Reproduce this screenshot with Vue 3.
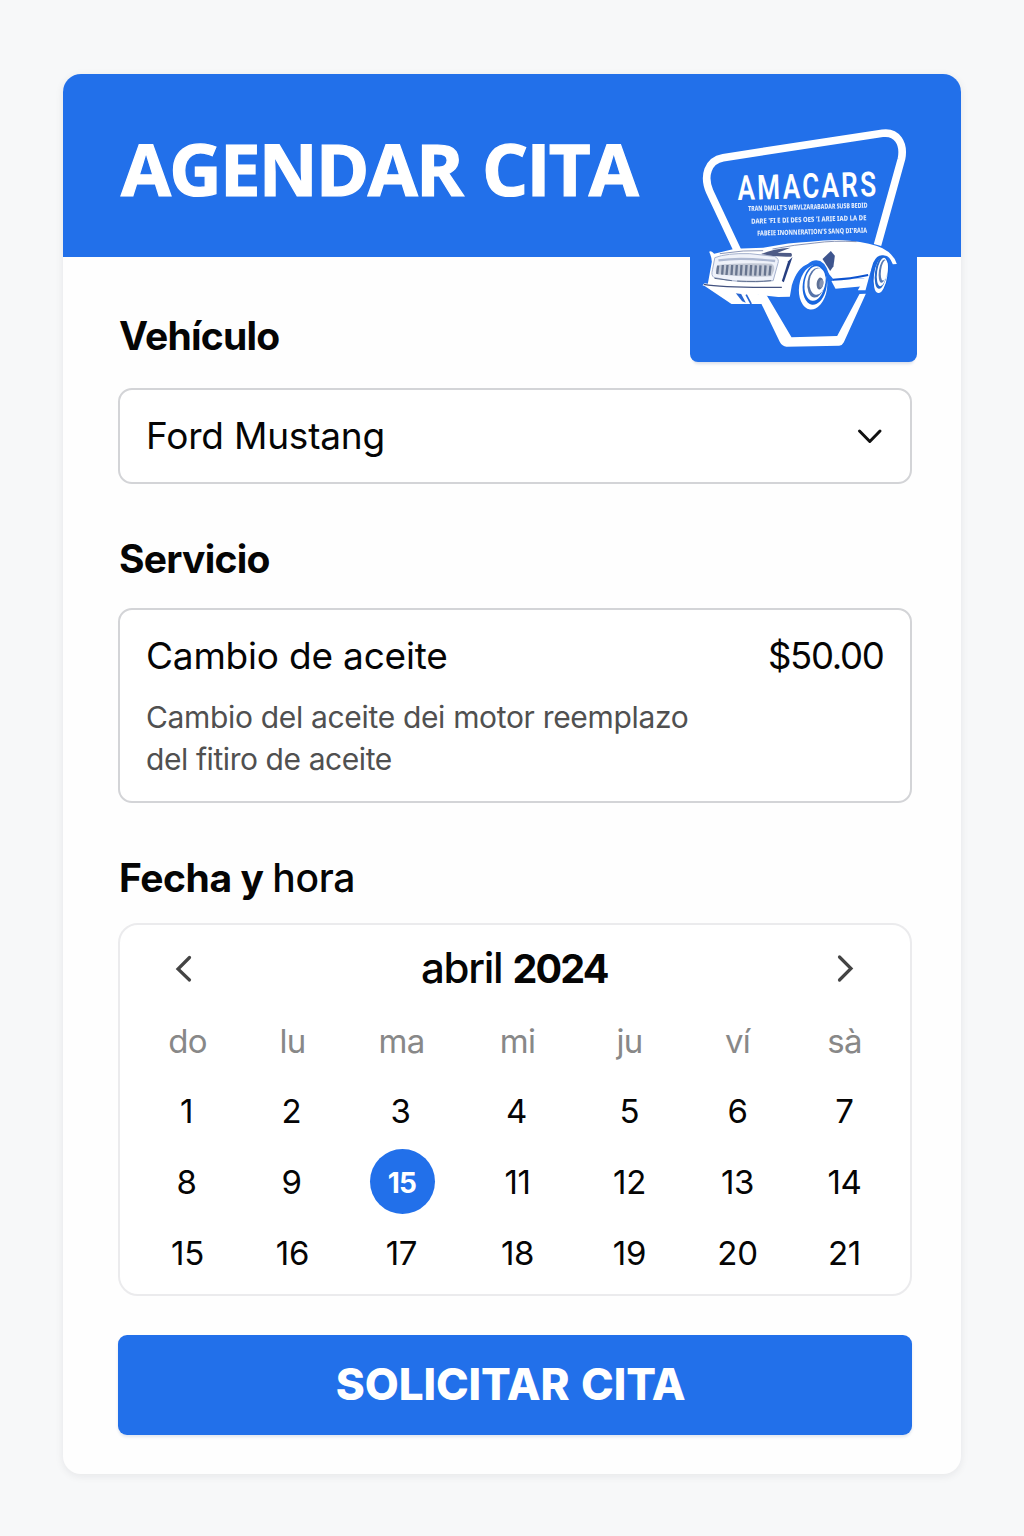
<script setup>
const weekdays = ['do', 'lu', 'ma', 'mi', 'ju', 'ví', 'sà']
const weeks = [
  ['1', '2', '3', '4', '5', '6', '7'],
  ['8', '9', '15', '11', '12', '13', '14'],
  ['15', '16', '17', '18', '19', '20', '21'],
]
const isSelected = (row, col) => row === 1 && col === 2
</script>

<template>
  <main class="page">
    <section class="card">
      <header class="header">
        <h1 class="title">AGENDAR CITA</h1>
        <div class="logo">
          <svg viewBox="31 0 680 756" width="227" height="252" aria-label="AMACARS">
            <path d="M174 424L90 246C69 198 84 151 130 143L608 70C651 64 674 100 665 146L593 405" fill="none" stroke="#fff" stroke-width="23" />
            <path d="M232 555L260 555L335 682L472 678L539 552L558 551L492 697Q488 706 478 707L320 710Q307 709 300 696Z" fill="#fff" />
            <g fill="#fff" transform="rotate(-1.7 176 271)">
              <text class="brand" transform="translate(174 270) scale(.76 1)" textLength="547">AMACARS</text>
            </g>
            <g class="small" fill="#fff">
              <text x="205" y="303" textLength="358" lengthAdjust="spacingAndGlyphs" transform="rotate(-1.6 205 303)">TRAN DMULT'S WRVLZARABADAR SUSB BEDID</text>
              <text x="214" y="341" textLength="346" lengthAdjust="spacingAndGlyphs" transform="rotate(-1.8 214 341)">DARE 'FI E DI DES OES 'I ARIE IAD LA DE</text>
              <text x="232" y="377" textLength="330" lengthAdjust="spacingAndGlyphs" transform="rotate(-1.6 232 377)">FABEIE INONNERATION'S SANQ DI'RAIA</text>
            </g>
            <g transform="translate(60 375)">
              <path fill="#fff" d="M28 50Q33 46 43 56L105 41L190 38Q270 22 330 20Q400 12 450 17Q515 23 548 40Q582 57 591 87L579 88Q568 58 550 62Q526 72 512 110L497 166L474 166L494 130L402 134L382 110Q360 78 326 86Q291 98 276 151L270 185L235 186L100 172L8 151L14 145L24 146L36 80Q36 68 28 50Z" />
              <path fill="#fff" d="M9 149L110 168L176 178L190 207L95 207Z" />
              <path fill="#fff" d="M395 139L403 135L498 130L490 154L407 161Z" />
              <path d="M399 134Q450 132 505 120" fill="none" stroke="#0c52cf" stroke-width="6" />
              <path d="M12 148Q70 158 246 157" fill="none" stroke="#43527f" stroke-width="4" />
              <g class="soft">
                <path d="M45 68Q80 54 150 56L224 64Q240 72 234 86L220 137Q120 148 42 127Q33 121 38 104Z" fill="#eff2fa" stroke="#a5b1cd" stroke-width="3" />
                <path d="M56 76Q120 66 226 78" fill="none" stroke="#aeb9d2" stroke-width="7" />
                <path d="M54 90Q120 82 216 86Q226 91 222 108L215 124Q130 128 52 118Q43 107 54 90Z" fill="#c3c9d6" />
                <path d="M55 92L52 117M69 90L67 119M83 90L80 120M97 90L95 120M111 90L109 121M125 90L123 121M140 90L138 121M154 90L152 122M168 91L166 122M182 91L180 122M197 91L195 122M212 92L209 121" stroke="#68758f" stroke-width="7" fill="none" />
                <path d="M184 57Q220 41 272 38L233 53L274 54Q279 59 274 65Q228 67 184 57Z" fill="#4e5b86" />
              </g>
              <path d="M44 130L96 137M112 138Q170 141 214 137" fill="none" stroke="#596989" stroke-width="3" />
              <path d="M60 56L130 48L190 47M218 42Q285 29 345 24Q400 16 470 20" fill="none" stroke="#7180a8" stroke-width="2.5" />
              <path d="M278 66L265 79L246 138L252 142Z" fill="#263e80" />
              <path d="M368 72L393 48L405 62L401 94L391 108Z" fill="#3e558e" class="soft" />
              <path d="M108 175L124 177L138 203L127 199Z" fill="#2866d2" />
              <path d="M139 179L154 207" fill="none" stroke="#2866d2" stroke-width="5" />
              <path d="M294 156Q305 94 337 78Q372 67 387 116L393 150Q380 211 339 207Q305 204 294 156Z" fill="#2170e9" />
              <g transform="rotate(8 340 155)">
                <ellipse cx="340" cy="157" rx="42" ry="67" fill="#fff" />
                <ellipse cx="344" cy="148" rx="36" ry="61" fill="#1866df" />
                <ellipse cx="343" cy="145" rx="30" ry="52" fill="#fff" />
                <ellipse cx="347" cy="142" rx="26" ry="45" fill="#5573aa" />
                <ellipse cx="351" cy="138" rx="24" ry="40" fill="#fff" />
                <ellipse cx="359" cy="143" rx="10" ry="18" fill="#5d7095" />
                <ellipse cx="363" cy="143" rx="6" ry="12" fill="#8795b4" />
              </g>
              <path d="M523 157Q505 119 520 83Q532 58 550 61Q568 65 568 106Q563 164 540 173Q529 171 523 157Z" fill="#1866df" />
              <g transform="rotate(8 545 117)">
                <ellipse cx="543" cy="121" rx="20" ry="54" fill="#fff" />
                <ellipse cx="543" cy="113" rx="18" ry="49" fill="#2468cb" />
                <ellipse cx="546" cy="111" rx="15" ry="43" fill="#fff" />
                <ellipse cx="548" cy="108" rx="12" ry="35" fill="#5579b5" />
                <ellipse cx="552" cy="105" rx="10" ry="31" fill="#fff" />
              </g>
            </g>
          </svg>
        </div>
      </header>

      <div class="content">
        <h2 class="label vehicle-label">Vehículo</h2>
        <div class="box select">
          <span class="value">Ford Mustang</span>
          <svg width="28" height="18" viewBox="0 0 28 18" fill="none" stroke="#111" stroke-width="3" stroke-linecap="round" stroke-linejoin="round"><path d="M3.5 4L13.8 14.5L24 4" /></svg>
        </div>

        <h2 class="label service-label">Servicio</h2>
        <div class="box service">
          <div class="service-row">
            <span class="service-name">Cambio de aceite</span>
            <span class="price">$50.00</span>
          </div>
          <p class="description"><span class="line-a">Cambio del aceite dei motor reemplazo</span><br><span class="line-b">del fitiro de aceite</span></p>
        </div>

        <h2 class="label date-label">Fecha y <span>hora</span></h2>
        <div class="calendar">
          <div class="month">
            <svg width="20" height="30" viewBox="0 0 20 30" fill="none" stroke="#444" stroke-width="3.2" stroke-linecap="round" stroke-linejoin="miter"><path d="M15.5 4.5L4 16L15.5 27" /></svg>
            <div class="month-name"><span>abril</span> <b>2024</b></div>
            <svg width="20" height="30" viewBox="0 0 20 30" fill="none" stroke="#444" stroke-width="3.2" stroke-linecap="round" stroke-linejoin="miter"><path d="M3.5 4L15 15.5L3.5 27" /></svg>
          </div>
          <div class="week weekdays">
            <span v-for="day in weekdays" :key="day">{{ day }}</span>
          </div>
          <div v-for="(week, row) in weeks" :key="row" class="week">
            <span v-for="(day, col) in week" :key="col" :class="{ selected: isSelected(row, col), single: day.length === 1 && col < 4 }">{{ day }}</span>
          </div>
        </div>
        <button class="submit" type="button">SOLICITAR CITA</button>
      </div>
    </section>
  </main>
</template>

<style>
body { margin: 0; background: #f7f8f9; }
</style>

<style scoped>
* { box-sizing: border-box; }
.page { height: 1536px; padding: 74px 63px 62px; background: #f7f8f9; font-family: Inter, "Liberation Sans", sans-serif; color: #050505; }
.card { width: 898px; height: 1400px; border-radius: 18px; background: #fefefe; box-shadow: 0 2px 8px rgba(20, 25, 35, .08); }
.header { position: relative; height: 183px; padding: 48px 0 0 58px; border-radius: 18px 18px 0 0; background: #2270ea; }
.title { margin: 0; color: #fff; font: 700 72.5px/92px "Open Sans", sans-serif; letter-spacing: -1.8px; word-spacing: 3px; white-space: nowrap; -webkit-text-stroke: 1.2px #fff; }
.logo { position: absolute; z-index: 1; left: 627px; top: 36px; width: 227px; height: 252px; border-radius: 0 0 8px 8px; background: #2270ea; box-shadow: 0 5px 3px -3px rgba(30, 60, 130, .16); }
.logo svg { display: block; }
.brand { font: 600 103px Roboto, sans-serif; }
.small { font: 800 21px "Noto Sans", sans-serif; opacity: .88; }
.soft { filter: blur(1.2px); }
.content { display: flex; flex-direction: column; padding: 0 49.5px 0 55px; }
.label { margin: 0; padding-left: 1px; font-size: 39px; line-height: 50px; font-weight: 650; letter-spacing: -.75px; white-space: nowrap; }
.label span { font-weight: 500; letter-spacing: -.3px; }
.vehicle-label { margin-top: 54px; }
.service-label { margin-top: 50px; }
.date-label { margin-top: 50px; letter-spacing: -.45px; }
.box { border: 2px solid #d3d4d7; border-radius: 14px; background: #fff; }
.select { display: flex; align-items: center; justify-content: space-between; height: 96px; margin-top: 27px; padding: 0 26px 0 26px; }
.value { font-size: 37px; line-height: 48px; letter-spacing: -.2px; }
.service { height: 195px; margin-top: 24px; padding: 22px 26px 0 26px; }
.service-row { display: flex; justify-content: space-between; font-size: 37px; line-height: 48px; letter-spacing: -.2px; white-space: nowrap; }
.price { font-size: 36.5px; letter-spacing: -1.3px; margin-right: 0; }
.description { margin: 17px 0 0 0; color: #505050; font-size: 30px; line-height: 41.5px; letter-spacing: -.33px; white-space: nowrap; }
.line-b { letter-spacing: -.42px; }
.calendar { height: 373px; margin-top: 20px; border: 2px solid #ebebed; border-radius: 20px; background: #fff; }
.month { display: flex; align-items: center; justify-content: space-between; height: 83px; padding: 3px 53px 0 54px; }
.month-name { font-size: 40px; line-height: 52px; white-space: nowrap; word-spacing: -1px; margin-right: 2px; }
.month-name span { font-size: 42px; font-weight: 450; letter-spacing: -1.3px; }
.month-name b { font-size: 39.5px; font-weight: 650; letter-spacing: -1.9px; }
.week { display: grid; grid-template-columns: 105px 105px 113px 119px 105px 111px 103px; height: 71px; padding-left: 15px; align-items: center; justify-items: center; font-size: 33px; line-height: 40px; letter-spacing: -.3px; }
.weekdays { height: 67px; padding-bottom: 1px; color: #888; letter-spacing: -.8px; font-weight: 400; }
.single { padding-right: 2px; }
.selected { display: flex; align-items: center; justify-content: center; width: 65px; height: 65px; margin-left: 2px; padding: 2px 1px 0 0; border-radius: 50%; background: #2270ea; color: #fff; font-size: 28px; font-weight: 750; letter-spacing: -.7px; }
.submit { height: 100px; margin: 39px 0 0; padding: 0 8px 2px 0; border: 0; border-radius: 9px; background: #2270ea; box-shadow: 0 2px 3px rgba(20, 60, 130, .12); color: #fff; font: 800 44px/60px Inter, sans-serif; letter-spacing: -.1px; word-spacing: 2px; white-space: nowrap; }
</style>
